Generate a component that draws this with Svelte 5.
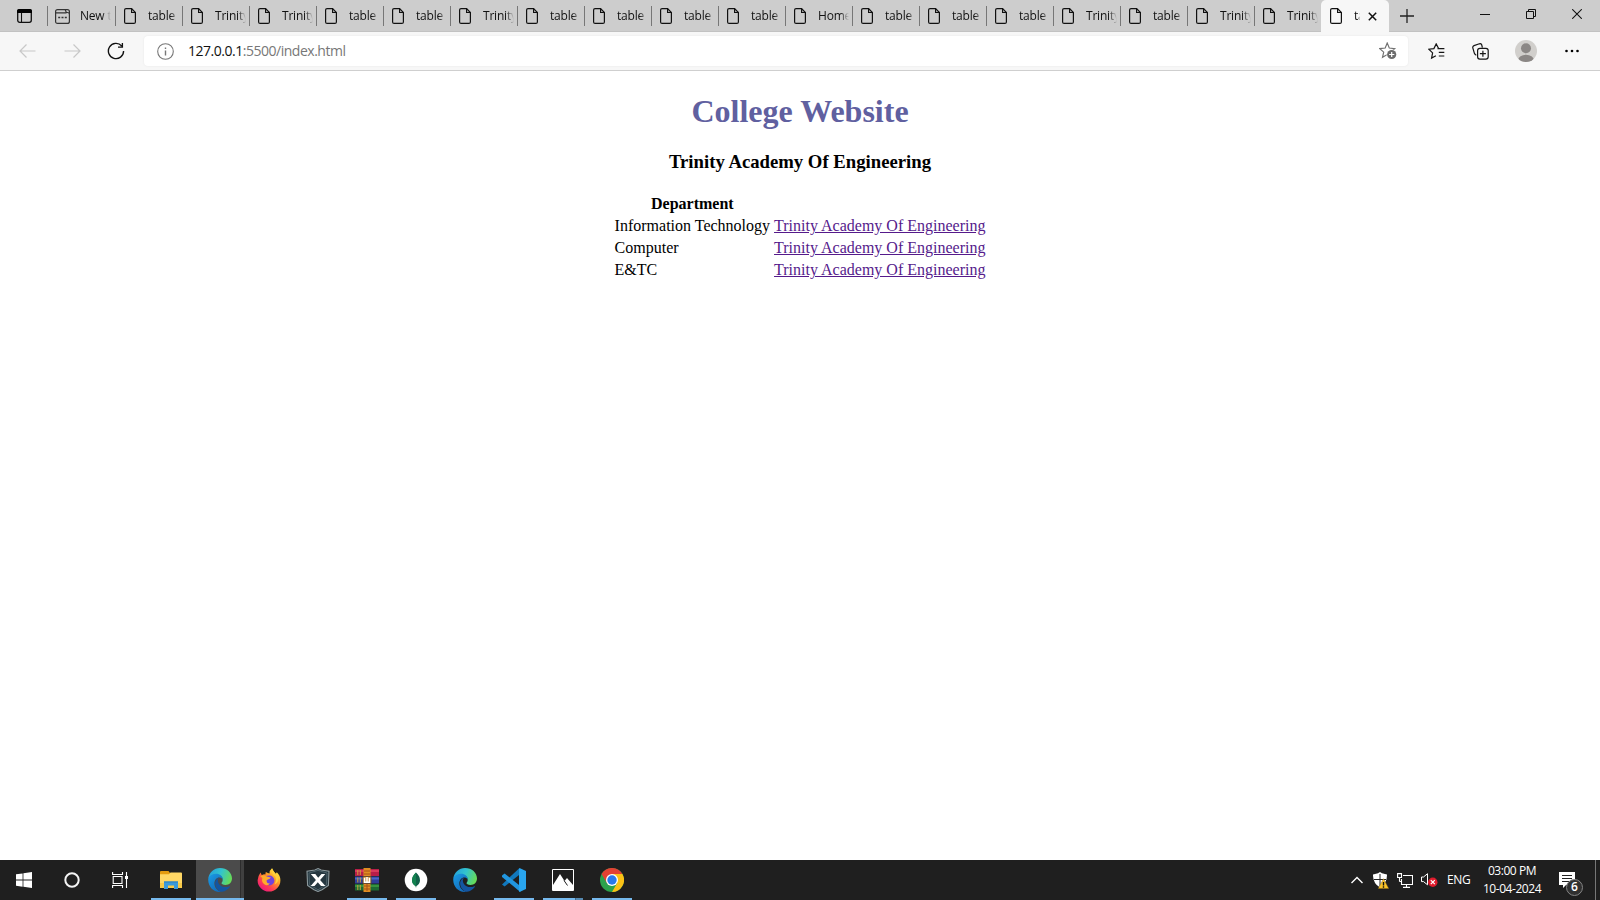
<script>
  const titles = [
    'New tab', 'table', 'Trinity', 'Trinity', 'table', 'table', 'Trinity', 'table', 'table', 'table',
    'table', 'Home', 'table', 'table', 'table', 'Trinity', 'table', 'Trinity', 'Trinity'
  ];
  const departments = ['Information Technology', 'Computer', 'E&TC'];
  const apps = [
    { id: 'explorer', open: true },
    { id: 'edge', open: true, active: true },
    { id: 'firefox' },
    { id: 'xbadge' },
    { id: 'rar', open: true },
    { id: 'mongo', open: true },
    { id: 'edge' },
    { id: 'code', open: true },
    { id: 'photos', open: true, stacked: true },
    { id: 'chrome', open: true }
  ];
</script>

{#snippet pageIcon()}
  <svg class="page-icon" width="12" height="16" viewBox="0 0 12 16" fill="none" stroke="#111" stroke-width="1.2">
    <path d="M2.1.6H7.6L11.4 4.6V13.9Q11.4 15.4 9.9 15.4H2.1Q.6 15.4.6 13.9V2.1Q.6.6 2.1.6Z" />
    <path d="M7.6.8V4.5H11.2" />
  </svg>
{/snippet}

{#snippet edgeIcon(n)}
  <svg width="24" height="24" viewBox="0 0 24 24">
    <defs>
      <linearGradient id="edgeTop{n}" x1="0" x2="1" y1=".2" y2=".5">
        <stop offset="0" stop-color="#249fdc" /><stop offset=".5" stop-color="#32c4cf" /><stop offset="1" stop-color="#66db58" />
      </linearGradient>
      <linearGradient id="edgeLow{n}" x1="0" x2=".8" y1="0" y2="1">
        <stop offset="0" stop-color="#1a9de6" /><stop offset="1" stop-color="#1265b5" />
      </linearGradient>
    </defs>
    <path fill="url(#edgeTop{n})" d="M.3 10.4C1.2 4.3 6 0 12 0c7 0 12 4.8 12 10.6 0 3.8-2.8 6.4-6.5 6.4-2.7 0-4-1-4-1.9 0-.6 1.2-1 1.2-3.1 0-3-2.8-5.2-6.3-5.2-3.8 0-7 1.7-8.1 3.6Z" />
    <path fill="url(#edgeLow{n})" d="M.3 10.4C1.5 7.3 4.7 5.8 8 5.8c4 0 6.8 2.6 6.8 5.6-1-1.4-2.2-1.8-3.4-1.8-3 0-5 2.7-5 6 0 3.9 2.9 7.6 7 8.2C5.7 25-.5 18.7.3 10.4Z" />
    <path fill="#1455a0" d="M11.2 9.6C8 11 6.4 14 7.4 17.4 8.6 21.5 12 23.7 14 23.8c3.5-.5 6.2-2.3 8-5 .3-.5-.1-.8-.6-.6-4 1.8-8.6.8-10.6-2.5-1.4-2.3-1.2-4.6.4-6.1Z" />
  </svg>
{/snippet}

<div class="screen">
  <header class="tabs">
    <div class="tab-actions">
      <svg width="15" height="14" viewBox="0 0 15 14"><rect x=".7" y=".7" width="13.6" height="12.6" rx="2" fill="none" stroke="#111" stroke-width="1.3" /><path d="M2 0h11q2 0 2 2v2H0V2Q0 0 2 0Z" fill="#000" /><path d="M4.5 4v9" stroke="#111" stroke-width="1.1" /></svg>
    </div>
    {#each titles as title, i}
      <div class="tab" class:first={i === 0}>
        {#if i === 0}
          <svg class="new-icon" width="15" height="15" viewBox="0 0 15 15" fill="none" stroke="#333" stroke-width="1.2"><path d="M2.6.6H10L11.4 3.5H12.4Q14.4 3.5 14.4 5.5V12.4Q14.4 14.4 12.4 14.4H2.6Q.6 14.4.6 12.4V2.6Q.6.6 2.6.6ZM.8 3.8H11.5M10 .6H12.4Q14.4.6 14.4 2.6V5" /><path d="M3.2 8.5h2M6.5 8.5h2M9.8 8.5h2" stroke-width="1.7" /></svg>
        {:else}
          {@render pageIcon()}
        {/if}
        <span>{title}</span>
      </div>
    {/each}
    <div class="tab active">
      {@render pageIcon()}
      <span>table</span>
      <svg class="close-tab" width="9" height="9" viewBox="0 0 9 9"><path d="M.8.8l7.4 7.4M8.2.8L.8 8.2" stroke="#111" stroke-width="1.5" /></svg>
    </div>
    <svg class="plus" width="14" height="14" viewBox="0 0 14 14"><path d="M7 0v14M0 7h14" stroke="#222" stroke-width="1.3" /></svg>
    <div class="window-buttons">
      <svg width="10" height="12" viewBox="0 0 10 12"><path d="M0 6.5h10" stroke="#111" /></svg>
      <svg width="10" height="10" viewBox="0 0 10 10" fill="none" stroke="#111"><path d="M.5 2.5h7v7h-7ZM2.5 2.5v-2h7v7h-2" /></svg>
      <svg width="10" height="10" viewBox="0 0 10 10"><path d="M.2.2l9.6 9.6M9.8.2L.2 9.8" stroke="#111" stroke-width="1.05" /></svg>
    </div>
  </header>

  <nav class="toolbar">
    <svg class="back" width="17" height="14" viewBox="0 0 17 14" fill="none" stroke="#c8c8c8" stroke-width="1.2"><path d="M7.5.5L1 7l6.5 6.5M1 7h15.5" /></svg>
    <svg class="forward" width="17" height="14" viewBox="0 0 17 14" fill="none" stroke="#c8c8c8" stroke-width="1.2"><path d="M9.5.5L16 7l-6.5 6.5M16 7H.5" /></svg>
    <svg class="reload" width="18" height="18" viewBox="0 0 18 18" fill="none" stroke="#111" stroke-width="1.35"><path d="M16.6 9A7.6 7.6 0 1 1 14.7 4M15.4.9V5.1H11" /></svg>
    <div class="address">
      <svg width="17" height="17" viewBox="0 0 17 17" fill="none" stroke="#777" stroke-width="1.1"><circle cx="8.5" cy="8.5" r="7.8" /><path d="M8.5 7.4v5M8.5 4.5v1.4" stroke-width="1.4" /></svg>
      <p><b>127.0.0.1</b>:5500/index.html</p>
      <svg class="add-star" width="18" height="18" viewBox="0 0 18 18"><path d="M8.2 1l2.1 5 5.4.6-3.9 3.3 1 4.9-4.6-2.2-4.7 2.7 1.2-5.2L.8 6.6 6.2 6Z" fill="none" stroke="#707070" stroke-width="1.15" /><circle cx="12.7" cy="12.5" r="5.1" fill="#fff" /><circle cx="12.7" cy="12.5" r="4.6" fill="#6b6b6b" /><path d="M12.7 9.9v5.2M10.1 12.5h5.2" stroke="#fff" stroke-width="1.2" /></svg>
    </div>
    <svg class="favorites" width="17" height="17" viewBox="0 0 17 17" fill="none" stroke="#151515" stroke-width="1.2"><path d="M10.6 5.6L8.2.9 5.9 5.6.8 6.2l3.8 3.7-1 5.2 4.3-2.4M9.5 5.6h6.9M10.8 9.4h5.5M10.8 13h5.5" /></svg>
    <svg class="collections" width="17" height="17" viewBox="0 0 17 17" fill="none" stroke="#151515" stroke-width="1.2"><path d="M4.3 12.2Q3 12 2.4 10.3L.8 4.8Q.5 3.2 2 2.6L7.4.8Q9 .4 9.7 1.8L10.4 4.6" /><rect x="5.6" y="5.3" width="10.6" height="10.8" rx="2.3" fill="#f7f7f7" /><path d="M10.9 7.7v6M7.9 10.7h6" /></svg>
    <svg class="avatar" width="22" height="22" viewBox="0 0 22 22"><defs><clipPath id="avatarClip"><circle cx="11" cy="11" r="11" /></clipPath></defs><g clip-path="url(#avatarClip)"><path fill="#d1cfcc" d="M0 0h22v22H0z" /><circle cx="11" cy="8.3" r="5" fill="#8b8785" /><ellipse cx="11" cy="20.2" rx="7.8" ry="5.5" fill="#8b8785" /></g></svg>
    <svg class="more" width="14" height="4" viewBox="0 0 14 4"><circle cx="1.5" cy="2" r="1.3" /><circle cx="7" cy="2" r="1.3" /><circle cx="12.5" cy="2" r="1.3" /></svg>
  </nav>

  <main>
    <h1>College Website</h1>
    <h3>Trinity Academy Of Engineering</h3>
    <table>
      <tbody>
        <tr><th>Department</th></tr>
        {#each departments as department}
          <tr><td>{department}</td><td><a href="#top">Trinity Academy Of Engineering</a></td></tr>
        {/each}
      </tbody>
    </table>
  </main>

  <footer>
    <div class="system">
      <svg width="16" height="16" viewBox="0 0 16 16" fill="#fff"><path d="M0 2.3L6.6 1.4V7.6H0ZM7.4 1.2L16 0V7.6H7.4ZM0 8.4H6.6V14.7L0 13.8ZM7.4 8.4H16V16L7.4 14.8Z" /></svg>
    </div>
    <div class="system">
      <svg width="16" height="16" viewBox="0 0 16 16"><circle cx="8" cy="8" r="6.7" fill="none" stroke="#f4f4f4" stroke-width="2" /></svg>
    </div>
    <div class="system">
      <svg width="17" height="16" viewBox="0 0 17 16" fill="none" stroke="#fff" stroke-width="1.1"><path d="M.6 0V2.5H10.5V0M.6 16V13.5H10.5V16M1.2 4.5H10V11.5H1.2ZM14.5 0V16" /><path d="M13 4h3v3h-3z" fill="#fff" stroke="none" /></svg>
    </div>
    <div class="apps">
      {#each apps as app, i}
        <div class="app" class:open={app.open} class:focused={app.active} class:stacked={app.stacked}>
          {#if app.id === 'explorer'}
            <svg width="22" height="18" viewBox="0 0 22 18"><path fill="#e49b0f" d="M0 1Q0 0 1 0H8.5L10 2H21V7H0Z" /><path fill="#ffd765" d="M0 3.2H9L10.5 1.6H21Q22 1.6 22 2.6V17H0Z" /><path fill="#f7c948" d="M0 12h22v5H0z" /><path fill="#3b9adb" d="M4 10.5H18V18H14V14.5H8V18H4Z" /><path fill="#2b7fbe" d="M4 10.5h14v1H4z" /></svg>
          {:else if app.id === 'edge'}
            {@render edgeIcon(i)}
          {:else if app.id === 'firefox'}
            <svg width="24" height="24" viewBox="0 0 24 24">
              <defs><linearGradient id="fox" x1=".85" x2=".2" y1=".1" y2=".95"><stop offset="0" stop-color="#fff044" /><stop offset=".35" stop-color="#ff9d25" /><stop offset=".7" stop-color="#ff4050" /><stop offset="1" stop-color="#ed167e" /></linearGradient></defs>
              <path fill="url(#fox)" d="M3.5 4.5L4.8 7.2Q6.2 6.1 8.3 6.4L8.8 4Q11 5.3 12.5 5.5 12.4 2.2 15 .2 16 3.7 18.8 5.8L19.8 4.3Q23.3 7.4 23.4 12.2A11.4 11.4 0 1 1 .6 12.2Q.7 8.6 3.5 4.5Z" />
              <circle cx="12.3" cy="12.5" r="5.1" fill="#7143dc" />
              <path fill="#ffac2a" d="M3.3 8.2Q6.3 6.2 9.6 8.4L13.8 9.5Q13.3 11.1 10.8 11.4L9.4 12.8Q9.8 16 13 15.4 10.4 18.7 7 16 4.1 13.6 5.4 10Z" />
              <path fill="#ffcf3b" d="M15 .2Q14.1 5.8 18.2 8.5 20.2 12 17.5 16.4 21.7 14.6 21.7 8.4 18.6 7.1 15 .2Z" />
            </svg>
          {:else if app.id === 'xbadge'}
            <svg width="24" height="24" viewBox="0 0 24 24"><path fill="#253740" stroke="#8c999d" stroke-width="1.1" d="M12 .6L15.2 2 23 3.3 22.4 17.5 16 21.8 12 23.5 8 21.8 1.6 17.5 1 3.3 8.8 2Z" /><path fill="none" stroke="#4b6068" d="M12 2.4L21 5 20.5 16.7 12 21.8 3.5 16.7 3 5Z" /><path fill="#fff" d="M4.8 6H9.3L12.2 9.8 15.5 6H19.3L14.1 12 19.4 18H15L11.8 14.3 8.5 18H4.7L9.9 12Z" /></svg>
          {:else if app.id === 'rar'}
            <svg width="24" height="24" viewBox="0 0 24 24"><path fill="#b81e48" d="M0 1h24v7H0z" /><path fill="#d93a5c" d="M0 2h24v2H0z" /><path fill="#2f3d98" d="M0 8.5h24v7H0z" /><path fill="#4c66c8" d="M0 9.5h24v2H0z" /><path fill="#1d6b33" d="M0 16h24v6.5H0z" /><path fill="#37923f" d="M0 17h24v2H0z" /><path d="M2.8 2v5M2.8 9.5v5M2.8 17v5M5.3 2v5M5.3 9.5v5M5.3 17v5" stroke="#c9a13c" /><path fill="#e08d22" d="M8.5 0h7v24h-7z" /><path stroke="#a65118" d="M9 3h6M9 6h6M9 18h6M9 21h6M12 15v8" /><path fill="#d9a860" stroke="#6b4a2d" d="M8 8.5h8v7H8z" /><path d="M9.5 10v4.3h5V10M12 9v5" stroke="#fff" fill="none" stroke-width="1.4" /></svg>
          {:else if app.id === 'mongo'}
            <svg width="24" height="24" viewBox="0 0 24 24"><circle cx="12" cy="12" r="11.3" fill="#fff" /><path fill="#116149" d="M12 4.5Q16.3 8.4 16 12.5 15.8 16 12.4 18L12 20 11.6 18Q8.2 16 8 12.5 7.8 8.4 12 4.5Z" /><path fill="#13824f" d="M12 4.5Q7.8 8.4 8 12.5 8.2 16 11.6 18L12 19Z" /></svg>
          {:else if app.id === 'code'}
            <svg width="24" height="24" viewBox="0 0 24 24"><path fill="#1178bd" d="M0 16.5L17.5 0 18.3 6 2.6 18.6Z" /><path fill="#2196df" d="M0 7.5L2.6 5.6 18.3 18V24L0 8.9Z" /><path fill="#29a5ee" d="M17.5 0L24 3V21L17.5 24 17 23V1Z" /></svg>
          {:else if app.id === 'photos'}
            <svg width="22" height="22" viewBox="0 0 22 22"><path fill="#1e1e1e" stroke="#fff" d="M.5.5h21v21H.5z" /><path fill="#fff" d="M1 16L8 5 12.5 12 15 9 21 16V21H1Z" /><path d="M12 11.5L15.5 16.5" stroke="#1e1e1e" /></svg>
          {:else}
            <svg width="24" height="24" viewBox="0 0 24 24"><circle cx="12" cy="12" r="12" fill="#2ca24c" /><path fill="#e34133" d="M1.6 6A12 12 0 0 1 22.4 6H12L6.8 15Z" /><path fill="#fbc116" d="M22.4 6A12 12 0 0 1 12 24L17.2 15 12 6Z" /><circle cx="12" cy="12" r="6" fill="#fff" /><circle cx="12" cy="12" r="4.7" fill="#2979ec" /></svg>
          {/if}
        </div>
      {/each}
    </div>
    <div class="tray">
      <svg width="12" height="8" viewBox="0 0 12 8"><path d="M.5 7L6 1.5 11.5 7" fill="none" stroke="#fff" stroke-width="1.4" /></svg>
      <svg class="shield" width="16" height="17" viewBox="0 0 16 17"><path fill="#fff" d="M7 0L9 1.3 14 2.4Q14.3 11.5 7 15.5-.3 11.5 0 2.4L5 1.3Z" /><path stroke="#222" d="M7 2v12M1 7.5h12" /><path fill="#fbc52a" stroke="#8e6711" stroke-width=".4" d="M10.5 6.7L15.7 16.5H5.3Z" /><path stroke="#111" stroke-width="1.4" d="M10.5 10v3.4M10.5 14.3v1.4" /></svg>
      <svg class="network" width="16" height="15" viewBox="0 0 16 15" fill="none" stroke="#fff" stroke-width="1.1"><path d="M6 2.5H15.5V11.5H4.5V6M9.5 11.5V14M6 14.4H13M.6.6H4.5V4.5H.6ZM2.5 4.5V8.5M2.5 8.5H4.5" /></svg>
      <svg class="sound" width="17" height="14" viewBox="0 0 17 14"><path fill="none" stroke="#fff" d="M.5 4H2.5L6.5.7V11.8L2.5 8.6H.5Z" /><circle cx="11.8" cy="9.2" r="4.7" fill="#df1c2d" /><path d="M9.8 7.2l4 4M13.8 7.2l-4 4" stroke="#fff" stroke-width="1.2" /></svg>
      <span class="language">ENG</span>
      <div class="clock"><span>03:00 PM</span><span>10-04-2024</span></div>
      <div class="notifications">
        <svg width="16" height="16" viewBox="0 0 16 16"><path fill="#fff" d="M0 0H16V13H7L4 16V13H0Z" /><path stroke="#222" d="M3 3.5h10M3 6.5h10M3 9.5h7" /></svg>
        <span class="badge">6</span>
      </div>
    </div>
  </footer>
</div>

<style>
  :global(body) { margin: 0; }
  .screen { width: 1600px; height: 900px; display: flex; flex-direction: column; overflow: hidden; background: #fff; font-family: "Open Sans", sans-serif; }
  svg { display: block; flex-shrink: 0; }
  .tabs { height: 32px; flex-shrink: 0; display: flex; background: #cdcdcd; box-shadow: inset 0 -1px #c2c2c2; }
  .tab-actions { width: 47px; box-sizing: border-box; padding: 9px 0 0 17px; }
  .tab { width: 67px; flex-shrink: 0; box-sizing: border-box; display: flex; align-items: flex-start; padding: 8px 3px 0 9px; background: linear-gradient(#777, #777) 0 6px / 1px 20px no-repeat; }
  .tab.first { width: 68px; padding-left: 8px; }
  .new-icon { margin-top: 1px; }
  .tab span { margin-left: 12px; width: 31px; overflow: hidden; white-space: nowrap; font-size: 12px; line-height: 16px; letter-spacing: -.2px; color: #111; mask-image: linear-gradient(90deg, #000 72%, transparent); }
  .tab.first span { margin-left: 10px; }
  .tab.active { width: 68px; padding-left: 9px; background: #f7f7f7; border-radius: 5px 5px 0 0; }
  .tab.active span { width: 6px; }
  .close-tab { margin: 4px 0 0 8px; }
  .plus { margin: 9px 0 0 11px; }
  .window-buttons { display: flex; align-items: center; height: 28px; gap: 36px; margin-left: auto; padding-right: 18px; }
  .toolbar { height: 39px; flex-shrink: 0; box-sizing: border-box; display: flex; align-items: center; border-bottom: 1px solid #cfcfcf; background: #f7f7f7; padding-left: 19px; }
  .forward { margin-left: 28px; }
  .reload { margin: 0 19px 0 26px; }
  .address { width: 1264px; height: 30px; box-sizing: border-box; display: flex; align-items: center; padding: 0 11px 0 13px; border-radius: 4px; background: #fff; box-shadow: 0 0 2px #e4e4e4; }
  .address p { margin: 0 auto 2px 14px; font-size: 14px; letter-spacing: -.48px; color: #777; }
  .address b { font-weight: 400; color: #111; }
  .favorites { margin-left: 20px; }
  .collections { margin-left: 27px; }
  .avatar { margin-left: 26px; }
  .more { margin-left: 28px; }
  main { flex: 1; overflow: hidden; font-family: "Liberation Serif", serif; color: #000; text-align: center; }
  h1 { margin: 22px 0 21px; font-size: 32px; line-height: 37px; color: #6060a0; }
  h3 { margin: 0 0 20px; font-size: 18.72px; line-height: 21px; }
  table { margin: 0 auto; border-spacing: 2px; text-align: left; font-size: 16px; line-height: 18px; }
  td, th { padding: 1px; }
  th { text-align: center; }
  a { color: #551a8b; text-decoration: underline; }
  footer { height: 40px; flex-shrink: 0; display: flex; background: #1f1f1f; color: #fff; }
  .system { width: 48px; display: grid; place-items: center; }
  .apps { display: flex; margin-left: 3px; }
  .app { width: 49px; height: 40px; box-sizing: border-box; padding-right: 1px; display: grid; place-items: center; }
  .open { background: linear-gradient(#76b9ed, #76b9ed) 4px 38px / 40px 2px no-repeat; }
  .focused { background: linear-gradient(#76b9ed, #76b9ed) 0 38px / 48px 2px no-repeat, linear-gradient(90deg, #4b4b4b 44px, #2d2d2d 44px, #2d2d2d 45px, #404040 45px, #404040 48px, transparent 48px); }
  .stacked { background: linear-gradient(90deg, #76b9ed 32px, #426b8c 32px, #426b8c 33px, #568ab2 33px) 4px 38px / 40px 2px no-repeat; }
  .tray { display: flex; align-items: center; margin-left: auto; padding-right: 4px; background: linear-gradient(#777, #777) 244px 0 / 1px 40px no-repeat; width: 245px; }
  .shield { margin-left: 10px; }
  .network { margin-left: 8px; }
  .sound { margin-left: 8px; }
  .language { width: 24px; margin-left: 9px; margin-bottom: 1px; font-size: 12px; letter-spacing: -.35px; }
  .clock { width: 60px; margin-left: 11px; display: flex; flex-direction: column; align-items: center; font-size: 12px; line-height: 18px; letter-spacing: -.45px; white-space: nowrap; }
  .notifications { position: relative; margin-left: 17px; }
  .badge { position: absolute; left: 7px; top: 7px; width: 15px; height: 15px; border: 1px solid #858585; border-radius: 50%; background: #303030; text-align: center; font-size: 12px; line-height: 14px; font-weight: 600; }
</style>
